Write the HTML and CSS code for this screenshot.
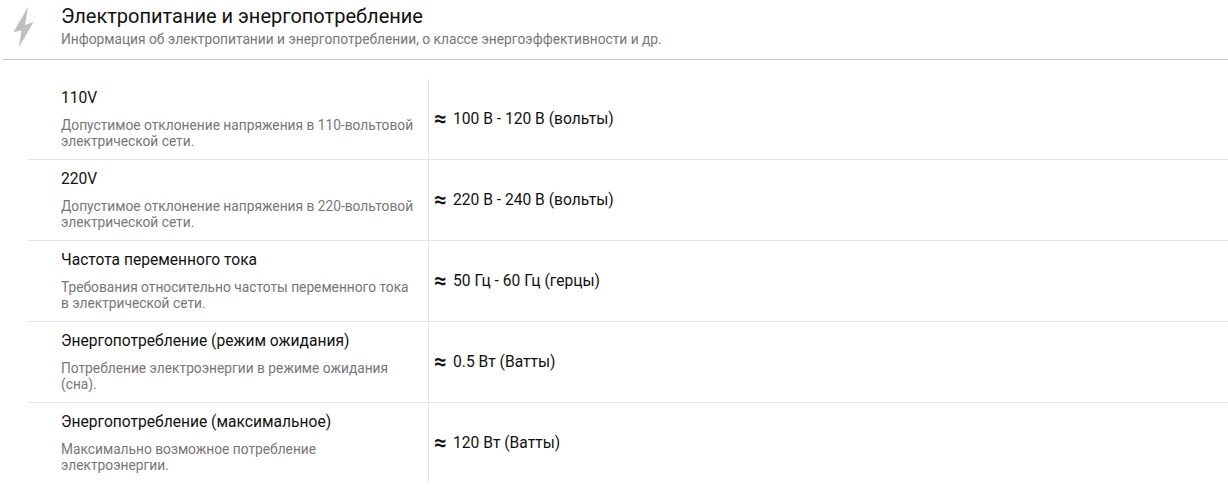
FILE: index.html
```html
<!DOCTYPE html>
<html lang="ru">
<head>
<meta charset="utf-8">
<title>Электропитание и энергопотребление</title>
<link rel="stylesheet" href="styles.css">
</head>
<body>
<header class="head">
  <svg class="bolt" width="24" height="42" viewBox="0 0 24 42" aria-hidden="true"><path d="M16 1 L1.500 26 L9.500 24.500 L7 41 L21.500 16 L13 19 Z" fill="#bfbfbf"/></svg>
  <div class="head-text">
    <h2 class="title">Электропитание и энергопотребление</h2>
    <p class="sub">Информация об электропитании и энергопотреблении, о классе энергоэффективности и др.</p>
  </div>
</header>
<section class="table">
  <div class="row">
    <div class="name"><div class="label">110V</div><div class="desc">Допустимое отклонение напряжения в 110-вольтовой электрической сети.</div></div>
    <div class="val"><span class="approx">≈</span>100 В - 120 В (вольты)</div>
  </div>
  <div class="row">
    <div class="name"><div class="label">220V</div><div class="desc">Допустимое отклонение напряжения в 220-вольтовой электрической сети.</div></div>
    <div class="val"><span class="approx">≈</span>220 В - 240 В (вольты)</div>
  </div>
  <div class="row">
    <div class="name"><div class="label">Частота переменного тока</div><div class="desc">Требования относительно частоты переменного тока в электрической сети.</div></div>
    <div class="val"><span class="approx">≈</span>50 Гц - 60 Гц (герцы)</div>
  </div>
  <div class="row">
    <div class="name"><div class="label">Энергопотребление (режим ожидания)</div><div class="desc">Потребление электроэнергии в режиме ожидания (сна).</div></div>
    <div class="val"><span class="approx">≈</span>0.5 Вт (Ватты)</div>
  </div>
  <div class="row">
    <div class="name"><div class="label">Энергопотребление (максимальное)</div><div class="desc">Максимально возможное потребление электроэнергии.</div></div>
    <div class="val"><span class="approx">≈</span>120 Вт (Ватты)</div>
  </div>
</section>
</body>
</html>
```
FILE: styles.css
```css
html, body { margin: 0; padding: 0; background: #fff; }
body { font-family: Roboto, "Liberation Sans", sans-serif; color: #111; overflow: hidden; }
.head { display: flex; align-items: flex-start; height: 59px; margin-left: 3px; border-bottom: 1px solid #c8c8c8; box-sizing: content-box; }
.bolt { margin: 6px 0 0 9px; flex: none; }
.head-text { margin-left: 25px; padding-top: 5px; }
.title { margin: 0; font-size: 20px; line-height: 23px; font-weight: 400; color: #111; }
.sub { margin: 3px 0 0; font-size: 13.75px; line-height: 16px; color: #777; }
.table { margin: 19px 0 0 28px; }
.row { display: grid; grid-template-columns: 401px 1fr; height: 81px; box-sizing: border-box; border-bottom: 1px solid #e6e6e6; }
.row:last-child { height: 80px; border-bottom: 0; }
.name { padding: 10px 13px 0 33px; border-right: 1px solid #e6e6e6; }
.label { font-size: 15.6px; line-height: 18px; color: #111; }
.desc { margin-top: 10px; font-size: 13.75px; line-height: 16px; color: #777; }
.val { display: flex; align-items: center; padding-left: 5px; font-size: 15.6px; color: #111; }
.approx { width: 19px; font-size: 22px; font-weight: 700; line-height: 18px; }
```
